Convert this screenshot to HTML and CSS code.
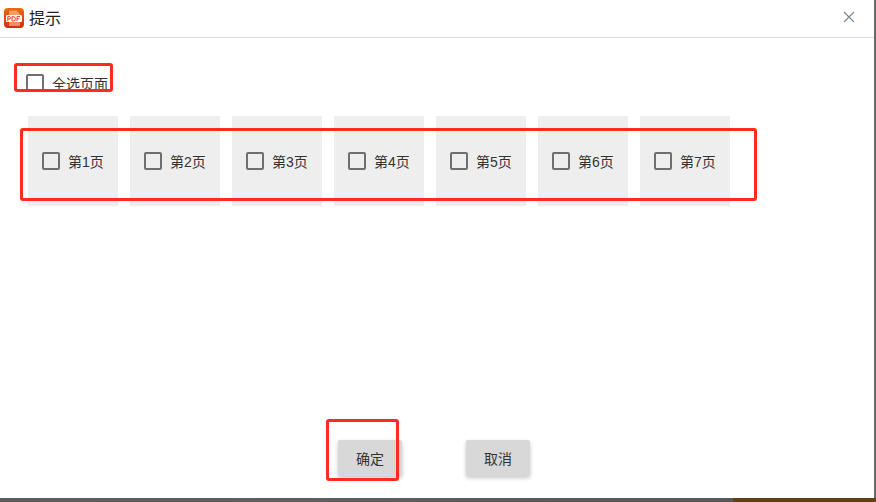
FILE: index.html
```html
<!DOCTYPE html>
<html lang="zh">
<head>
<meta charset="utf-8">
<title>提示</title>
<link rel="stylesheet" href="styles.css">
</head>
<body>
<div class="screen">
  <div class="upper">
    <main class="dialog">
      <header class="title-bar">
        <svg class="app-icon" viewBox="0 0 20 20" width="20" height="20">
          <defs><linearGradient id="g" x1="0" y1="0" x2="0" y2="1"><stop offset="0" stop-color="#ee6a0e"/><stop offset="1" stop-color="#d92a08"/></linearGradient></defs>
          <rect width="20" height="20" rx="4" fill="url(#g)"/>
          <path d="M5 2.5h7.5L16 6v12H5z" fill="#f9c9a0" opacity=".6"/>
          <rect x="2" y="7" width="16" height="7" rx="1" fill="#fff"/>
          <path d="M3.8 13V8.6h1.6a1.2 1.2 0 0 1 0 2.4H3.8M8 8.6V13h1.2a2.2 2.2 0 0 0 0-4.4zM13 13V8.6h3M13 10.8h2.4" fill="none" stroke="#e2401a" stroke-width="1"/>
        </svg>
        <h1 class="title">提示</h1>
        <svg class="close" viewBox="0 0 12 12" width="12" height="12"><path d="M1 1l10 10M11 1L1 11" stroke="#7f8a94" stroke-width="1.2" fill="none"/></svg>
      </header>
      <div class="content">
        <label class="select-all"><span class="box"></span><span class="label">全选页面</span></label>
        <div class="pages">
          <label class="page"><span class="box"></span><span class="label">第1页</span></label>
          <label class="page"><span class="box"></span><span class="label">第2页</span></label>
          <label class="page"><span class="box"></span><span class="label">第3页</span></label>
          <label class="page"><span class="box"></span><span class="label">第4页</span></label>
          <label class="page"><span class="box"></span><span class="label">第5页</span></label>
          <label class="page"><span class="box"></span><span class="label">第6页</span></label>
          <label class="page"><span class="box"></span><span class="label">第7页</span></label>
        </div>
        <div class="actions">
          <button class="btn" type="button">确定</button>
          <button class="btn" type="button">取消</button>
        </div>
      </div>
    </main>
    <div class="edge"></div>
  </div>
  <div class="desktop"><div class="desktop-grey"></div><div class="desktop-brown"></div></div>
  <div class="mark mark-all"></div>
  <div class="mark mark-pages"></div>
  <div class="mark mark-ok"></div>
</div>
</body>
</html>
```
FILE: styles.css
```css
* { box-sizing: border-box; }
html, body { margin: 0; padding: 0; }
body {
  width: 876px;
  height: 502px;
  overflow: hidden;
  background: #fff;
  font-family: "Liberation Sans", "Noto Sans CJK SC", sans-serif;
  color: #333;
}
.screen { position: relative; width: 876px; height: 502px; display: flex; flex-direction: column; }
.upper { flex: 1; display: flex; min-height: 0; }
.dialog { flex: 1; display: flex; flex-direction: column; background: #fff; min-width: 0; }
.edge { width: 2px; background: #6a6a6a; }
.desktop { height: 4px; display: flex; }
.desktop-grey { flex: 1; background: linear-gradient(90deg, #5c5c5c, #5f5f5f 40%, #595959 80%); }
.desktop-brown { width: 143px; background: #5f4218; }

.title-bar {
  height: 38px;
  display: flex;
  align-items: center;
  padding: 0 19px 0 4px;
  border-bottom: 1px solid #dedede;
}
.app-icon { flex: none; margin-top: -1px; }
.title { margin: 0 0 0 5px; flex: 1; font-size: 16px; font-weight: 400; line-height: 20px; color: #222; }
.close { flex: none; margin-top: -3px; }

.content { flex: 1; display: flex; flex-direction: column; padding-left: 28px; }
.box {
  flex: none;
  width: 18px;
  height: 18px;
  border: 2px solid #6f6f6f;
  border-radius: 2px;
}
.label { font-size: 14px; line-height: 18px; color: #333; padding-top: 1px; }
.select-all { display: flex; align-items: center; gap: 8px; margin: 36px 0 0 -2px; height: 18px; }
.pages { display: flex; gap: 12px; margin-top: 24px; }
.page {
  width: 90px;
  height: 90px;
  background: #eeeeee;
  display: flex;
  align-items: center;
  gap: 8px;
  padding-left: 14px;
}
.actions { display: flex; gap: 64px; margin-top: 234px; padding-left: 310px; }
.btn {
  width: 64px;
  height: 36px;
  border: 0;
  border-radius: 2px;
  padding: 0;
  background: #d8d8d8;
  color: #333;
  font: inherit;
  font-size: 14px;
  box-shadow: 0 2px 4px rgba(0, 0, 0, .22);
}
.mark { position: absolute; border: 3px solid #ff2a20; border-radius: 3px; pointer-events: none; }
.mark-all { left: 14px; top: 63px; width: 99px; height: 29px; }
.mark-pages { left: 20px; top: 128px; width: 737px; height: 73px; }
.mark-ok { left: 326px; top: 419px; width: 73px; height: 62px; }
```
